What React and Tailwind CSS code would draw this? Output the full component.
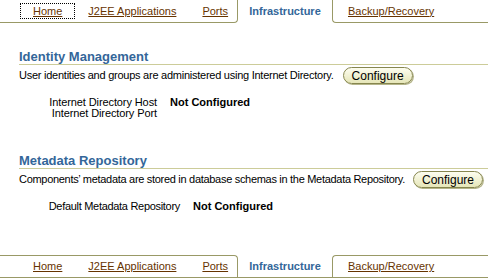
const tabs = ["Home", "J2EE Applications", "Ports"];

const TabBar = ({ bottom }) => (
  <div
    className={`flex h-[23px] text-[11px] whitespace-nowrap ${
      bottom ? "h-[22px] border-b border-[#999966]" : ""
    }`}
  >
    <div
      className={`w-[238px] flex items-center pl-[20px] border-r border-[#999966] ${
        bottom ? "border-t rounded-tr-[4px]" : "border-b rounded-br-[4px]"
      }`}
    >
      {tabs.map((t, i) => (
        <a
          key={t}
          href="#"
          className={`px-[13px] text-[#663300] underline ${
            i === 0 && !bottom ? "outline-1 outline-dotted outline-black -outline-offset-1" : ""
          }`}
        >
          {t}
        </a>
      ))}
    </div>
    <div className="w-[94px] flex items-center justify-center font-bold text-[#336699]">
      Infrastructure
    </div>
    <div
      className={`flex-1 flex items-center pl-[15px] border-l border-[#999966] ${
        bottom ? "border-t rounded-tl-[4px]" : "border-b rounded-bl-[4px]"
      }`}
    >
      <a href="#" className="text-[#663300] underline">
        Backup/Recovery
      </a>
    </div>
  </div>
);

const ConfigureButton = () => (
  <button className="h-[17px] px-[8px] rounded-full border border-[#86864f] bg-gradient-to-b from-[#fdfdf0] to-[#e6e6b8] shadow-[1px_1px_0_#b5b58a] text-[12px] leading-[14px] text-black whitespace-nowrap shrink-0">
    Configure
  </button>
);

const Section = ({ title, text, textClass, rows, labelWidth, labelClass, top }) => (
  <div className={top}>
    <h2 className="text-[13px] leading-[15px] font-bold text-[#336699] border-b border-[#cccc99]">
      {title}
    </h2>
    <div className="flex items-center mt-[1px] h-[19px] whitespace-nowrap">
      <span className={textClass}>{text}</span>
      <ConfigureButton />
    </div>
    <div
      className="grid gap-x-[13px] mt-[12px] leading-[11px] whitespace-nowrap"
      style={{ gridTemplateColumns: `${labelWidth}px auto` }}
    >
      {rows.map(([label, value]) => (
        <div key={label} className="contents">
          <div className={`text-right ${labelClass}`}>{label}</div>
          <div className="font-bold">{value}</div>
        </div>
      ))}
    </div>
  </div>
);

export default function App() {
  return (
    <div className="h-[278px] flex flex-col bg-white text-black text-[11px] font-['Liberation_Sans',Arial,sans-serif]">
      <TabBar />
      <div className="pl-[19px]">
        <Section
          top="mt-[26px]"
          title="Identity Management"
          text="User identities and groups are administered using Internet Directory."
          textClass="tracking-[-0.25px] mr-[9px]"
          labelWidth={138}
          labelClass="tracking-[-0.1px]"
          rows={[
            ["Internet Directory Host", "Not Configured"],
            ["Internet Directory Port", ""],
          ]}
        />
        <Section
          top="mt-[34px]"
          title="Metadata Repository"
          text="Components’ metadata are stored in database schemas in the Metadata Repository."
          textClass="tracking-[-0.3px] mr-[8px]"
          labelWidth={161}
          labelClass="tracking-[-0.3px]"
          rows={[["Default Metadata Repository", "Not Configured"]]}
        />
      </div>
      <div className="mt-auto">
        <TabBar bottom />
      </div>
    </div>
  );
}
